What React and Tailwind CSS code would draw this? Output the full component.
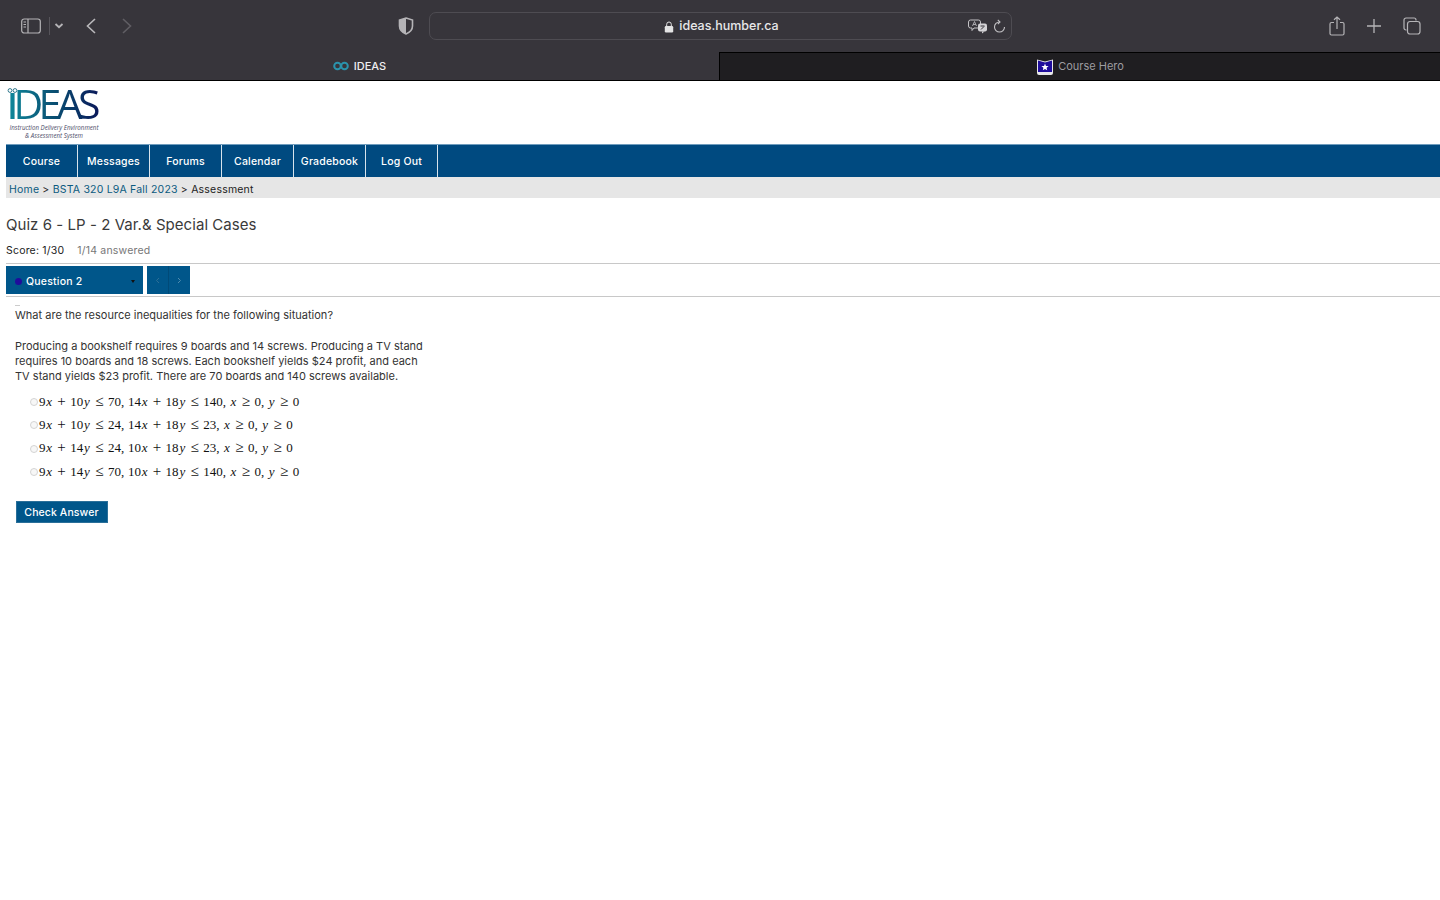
import React from "react";

const V = ({ children }) => <i className="inline-block w-[7.5px] italic text-center">{children}</i>;
const Op = ({ children }) => (
  <span className="inline-block w-[10px] mx-[3.6px] text-center text-[15px] leading-none">{children}</span>
);
const Comma = () => <span className="inline-block w-[7px]">,</span>;

function Expr({ a, b, c, d, e, f }) {
  return (
    <span className="font-['Liberation_Serif',serif] text-[13px] text-[#111] whitespace-nowrap flex items-baseline">
      <span>{a}</span><V>x</V><Op>+</Op><span>{b}</span><V>y</V><Op>≤</Op><span>{c}</span><Comma />
      <span>{d}</span><V>x</V><Op>+</Op><span>{e}</span><V>y</V><Op>≤</Op><span>{f}</span><Comma />
      <V>x</V><Op>≥</Op><span>0</span><Comma />
      <V>y</V><Op>≥</Op><span>0</span>
    </span>
  );
}

const opts = [
  ["9", "10", "70", "14", "18", "140"],
  ["9", "10", "24", "14", "18", "23"],
  ["9", "14", "24", "10", "18", "23"],
  ["9", "14", "70", "10", "18", "140"],
];

const nav = ["Course", "Messages", "Forums", "Calendar", "Gradebook", "Log Out"];

function Chrome() {
  return (
    <div className="bg-[#37353b] shrink-0">
      <div className="h-[52px] relative flex items-center pl-[21px] pr-[19px] text-[#b5b4b7]">
        <svg width="20" height="16" viewBox="0 0 20 16" fill="none" stroke="currentColor" strokeWidth="1.2">
          <rect x="0.7" y="1" width="18.6" height="14" rx="2.5" />
          <path d="M7 1v14" />
          <path d="M2.5 4h2.5M2.5 6.5h2.5M2.5 9h2.5" />
        </svg>
        <div className="w-px h-[18px] bg-[#56545a] ml-[8px]" />
        <svg className="ml-[4px]" width="10" height="8" viewBox="0 0 10 8" fill="none" stroke="currentColor" strokeWidth="1.8">
          <path d="M1.5 2l3.5 3.2L8.5 2" />
        </svg>
        <svg className="ml-[21px]" width="12" height="18" viewBox="0 0 12 18" fill="none" stroke="#b9b8bb" strokeWidth="1.6">
          <path d="M10 2L2.5 9l7.5 7" />
        </svg>
        <svg className="ml-[24px]" width="12" height="18" viewBox="0 0 12 18" fill="none" stroke="#605e64" strokeWidth="1.6">
          <path d="M2 2l7.5 7L2 16" />
        </svg>
        <svg className="ml-[265px]" width="16" height="18" viewBox="0 0 16 18">
          <path d="M8 1l6.5 2v6c0 4-3 6.5-6.5 8C4.5 15.5 1.5 13 1.5 9V3z" fill="none" stroke="#b5b4b7" strokeWidth="1.6" />
          <path d="M8 1L1.5 3v6c0 4 3 6.5 6.5 8z" fill="#b5b4b7" />
        </svg>
        <div className="ml-[15px] w-[583px] h-[28px] rounded-[7px] border border-[#4e4c52] flex items-center justify-center relative">
          <svg width="10" height="12" viewBox="0 0 10 12" fill="#e4e4e5" className="mr-[5px] ml-[2px] mt-[1px]">
            <rect x="0.8" y="5" width="8.4" height="6.5" rx="1.2" />
            <path d="M2.7 5V3.3a2.3 2.3 0 0 1 4.6 0V5" fill="none" stroke="#e4e4e5" strokeWidth="1" />
          </svg>
          <span className="font-['Inter',sans-serif] text-[12.5px] font-medium text-[#e8e8e9] mt-[1px]">ideas.humber.ca</span>
          <svg className="absolute left-[538px] top-[6px]" width="20" height="15" viewBox="0 0 20 15" fill="none" stroke="#c4c3c6" strokeWidth="1">
            <path d="M2.5 1h8a2 2 0 0 1 2 2v4a2 2 0 0 1-2 2H6l-2 2.5V9H2.5a2 2 0 0 1-2-2V3a2 2 0 0 1 2-2z" />
            <path d="M4.5 7l2-4.5 2 4.5M5.2 5.5h2.6" strokeWidth="0.8" />
            <rect x="10" y="4.5" width="9" height="8" rx="2" fill="#d5d4d7" stroke="none" />
            <path d="M14 12.5v2l2.5-2z" fill="#d5d4d7" stroke="none" />
            <path d="M12.5 7h4M13 10.5l3-3" stroke="#37353b" />
          </svg>
          <svg className="absolute left-[563px] top-[6px]" width="13" height="14" viewBox="0 0 13 14" fill="none" stroke="#c4c3c6" strokeWidth="1.1">
            <path d="M11.5 8A5 5 0 1 1 6.5 3" />
            <path d="M4.8 0.8L7 3 4.8 5.2" />
          </svg>
        </div>
        <div className="ml-auto flex items-center">
          <svg width="16" height="20" viewBox="0 0 16 20" fill="none" stroke="#b5b4b7" strokeWidth="1.2">
            <path d="M5 6.5H2.5A1.5 1.5 0 0 0 1 8v9.5A1.5 1.5 0 0 0 2.5 19h11a1.5 1.5 0 0 0 1.5-1.5V8a1.5 1.5 0 0 0-1.5-1.5H11" />
            <path d="M8 13V1M5 3.8L8 1l3 2.8" />
          </svg>
          <svg className="ml-[22px]" width="14" height="14" viewBox="0 0 14 14" fill="none" stroke="#b5b4b7" strokeWidth="1.3">
            <path d="M7 0v14M0 7h14" />
          </svg>
          <svg className="ml-[22px]" width="18" height="18" viewBox="0 0 18 18" fill="none" stroke="#b5b4b7" strokeWidth="1.2">
            <path d="M3.5 13H3a2 2 0 0 1-2-2V3a2 2 0 0 1 2-2h8a2 2 0 0 1 2 2v.5" />
            <rect x="4.5" y="4.5" width="12.5" height="12.5" rx="2.5" />
          </svg>
        </div>
      </div>
      <div className="h-[29px] flex border-b border-black">
        <div className="w-[719px] flex items-center justify-center">
          <svg width="16" height="10" viewBox="0 0 16 10" fill="none" stroke="#2a93ac" strokeWidth="2">
            <circle cx="4.5" cy="5" r="3.3" />
            <circle cx="11.5" cy="5" r="3.3" />
          </svg>
          <span className="ml-[5px] font-['Inter',sans-serif] text-[11px] font-medium text-[#eeeeef]">IDEAS</span>
        </div>
        <div className="flex-1 bg-[#1f1e21] border-t border-l border-black flex items-center justify-center">
          <svg width="18" height="18" viewBox="0 0 18 18">
            <path d="M1 1.5L9 3.5l8-2V15a2 2 0 0 1-2 2H3a2 2 0 0 1-2-2z" fill="#e8e8ea" />
            <path d="M2 2.5L9 4.5l7-2V14H2z" fill="#1f0d9c" />
            <path d="M9 5.5l1 2.4 2.6.2-2 1.7.6 2.500L9 11l-2.200 1.300.6-2.500-2-1.700 2.600-.2z" fill="#fff" />
          </svg>
          <span className="ml-[4px] font-['Inter',sans-serif] text-[11px] text-[#9d9ca0]">Course Hero</span>
        </div>
      </div>
    </div>
  );
}

function Logo() {
  return (
    <div className="h-[63px] pl-[7px] relative shrink-0">
      <svg className="absolute left-[7px] top-[7px]" width="11" height="5" viewBox="0 0 11 5" fill="none" stroke="#1a6a80" strokeWidth="0.9">
        <circle cx="3" cy="2.5" r="1.9" />
        <circle cx="8" cy="2.5" r="1.9" />
      </svg>
      <div className="h-[34px] w-[94px] pt-[5px] font-['Open_Sans',sans-serif] text-[41px] leading-[34px] tracking-[-4.6px] bg-linear-to-r from-[#0f8a9c] via-[#0a4f72] to-[#0b1558] bg-clip-text text-transparent whitespace-nowrap box-content">
        <span className="text-[36px] font-semibold">I</span>DEAS
      </div>
      <div className="font-['Open_Sans',sans-serif] italic text-[6.2px] leading-[8px] text-[#4a4a66] w-[94px] text-center mt-[4px]">
        Instruction Delivery Environment
        <br />
        &amp; Assessment System
      </div>
    </div>
  );
}

export default function App() {
  return (
    <div className="h-[900px] w-[1440px] overflow-hidden bg-white flex flex-col font-['Inter',sans-serif]">
      <Chrome />
      <Logo />
      <div className="ml-[6px] h-[33px] bg-[#004a80] border-t border-[#6f9cbd] flex shrink-0">
        {nav.map((n) => (
          <div key={n} className="w-[72px] border-r border-[#d7e3ec] flex items-center justify-center text-[10.5px] tracking-[0.2px] font-medium text-white pt-[2px] whitespace-nowrap">
            {n}
          </div>
        ))}
      </div>
      <div className="ml-[6px] h-[21px] bg-[#e6e6e6] pl-[3px] pt-[4px] flex items-center text-[10.5px] text-[#222] shrink-0 whitespace-pre tracking-[0.2px]">
        <span className="text-[#0b5a80]">Home</span>
        {" > "}
        <span className="text-[#0b5a80]">BSTA 320 L9A Fall 2023</span>
        {" > Assessment"}
      </div>
      <div className="ml-[6px]">
        <h1 className="text-[15px] leading-[20px] tracking-[0.05px] text-[#3a3a3a] mt-[17px]">Quiz 6 - LP - 2 Var.&amp; Special Cases</h1>
        <div className="mt-[8px] h-[15px] flex items-center text-[10.5px] tracking-[0.2px] text-[#222]">
          Score: 1/30
          <span className="ml-[13px] text-[#777]">1/14 answered</span>
        </div>
        <div className="mt-[5px] h-px bg-[#c8c8c8]" />
        <div className="mt-[2px] h-[28px] flex">
          <div className="w-[137px] bg-[#00568a] flex items-center pl-[9px] pt-[3px] text-[10.5px] tracking-[0.2px] font-medium text-white relative">
            <span className="w-[7px] h-[7px] rounded-full bg-[#1f0d9c] mr-[4px]" />
            Question 2
            <span className="absolute left-[125px] top-[14px] border-x-[2.5px] border-t-[3px] border-x-transparent border-t-[#111]" />
          </div>
          <div className="ml-[4px] w-[43px] bg-[#00568a] flex">
            <div className="w-[22px] border-r border-[#004a78] flex items-center justify-center">
              <svg width="5" height="7" viewBox="0 0 5 7" fill="none" stroke="#2d6f96" strokeWidth="1"><path d="M4 1L1.5 3.5 4 6" /></svg>
            </div>
            <div className="flex-1 flex items-center justify-center">
              <svg width="5" height="7" viewBox="0 0 5 7" fill="none" stroke="#4f8bae" strokeWidth="1"><path d="M1 1l2.5 2.5L1 6" /></svg>
            </div>
          </div>
        </div>
        <div className="mt-[2px] h-px bg-[#c8c8c8]" />
        <div className="pl-[9px]">
          <div className="mt-[8px] w-[5px] h-px bg-[#ccc]" />
          <div className="mt-[2px] w-[410px] text-[11px] tracking-[0.01px] leading-[15.3px] text-[#333]">
            <p className="h-[30.6px]">What are the resource inequalities for the following situation?</p>
            <p>
              Producing a bookshelf requires 9 boards and 14 screws. Producing a TV stand requires 10 boards and 18 screws. Each bookshelf yields $24 profit, and each TV stand yields $23 profit. There are 70 boards and 140 screws available.
            </p>
          </div>
          <div className="mt-[9px] ml-[15px] flex flex-col gap-[7.3px]">
            {opts.map((o, i) => (
              <div key={i} className="h-[16px] flex items-center">
                <span className="w-[8px] h-[8px] rounded-full border border-[#d4d4d4] bg-[#f7f7f7] mr-[1px] mt-[1px]" />
                <Expr a={o[0]} b={o[1]} c={o[2]} d={o[3]} e={o[4]} f={o[5]} />
              </div>
            ))}
          </div>
          <div className="mt-[22px] ml-[1px] w-[92px] h-[22px] bg-[#00568a] border border-[#2a6f99] flex items-center justify-center pr-[1px] text-[10.5px] tracking-[0.1px] font-medium text-white">
            Check Answer
          </div>
        </div>
      </div>
    </div>
  );
}
